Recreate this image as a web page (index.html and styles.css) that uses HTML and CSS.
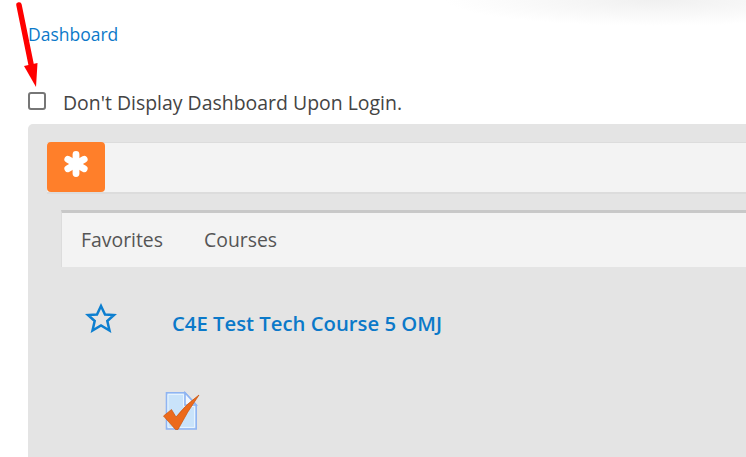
FILE: index.html
```html
<!DOCTYPE html>
<html lang="en">
<head>
  <meta charset="UTF-8">
  <title>Dashboard</title>
  <link rel="stylesheet" href="styles.css">
</head>
<body>

<div class="top-shadow"></div>

<!-- red arrow pasted over the screenshot -->
<svg class="arrow" width="40" height="90" viewBox="0 0 40 90">
  <path d="M19 5 L31 64" stroke="#f00" stroke-width="5.5" stroke-linecap="round" fill="none"/>
  <path d="M24 66 L37.5 63 L36 87 Z" fill="#f00"/>
</svg>

<header class="page-title">
  <a href="#">Dashboard</a>
</header>

<label class="hide-option">
  <input type="checkbox">
  <span>Don't Display Dashboard Upon Login.</span>
</label>

<section class="panel">
  <div class="panel-head">
    <div class="panel-logo">
      <svg width="26" height="26" viewBox="0 0 26 26">
        <g stroke="#fff" stroke-width="6.8" stroke-linecap="round">
          <path d="M13 3.5 V22.5"/>
          <path d="M4.8 8.2 L21.2 17.8"/>
          <path d="M4.8 17.8 L21.2 8.2"/>
        </g>
      </svg>
    </div>
  </div>

  <div class="tabs">
    <a href="#">Favorites</a>
    <a href="#">Courses</a>
  </div>

  <div class="course">
    <svg class="star" width="32" height="30" viewBox="0 0 32 30">
      <path d="M16 3 L20 11.5 L29 12 L22.3 18 L24.5 27.5 L16 22.5 L7.5 27.5 L9.7 18 L3 12 L12 11.5 Z" fill="none" stroke="#0d7fd0" stroke-width="2.5"/>
    </svg>
    <a class="course-name" href="#">C4E Test Tech Course 5 OMJ</a>
  </div>

  <div class="course-task">
    <svg width="37" height="40" viewBox="0 0 37 40">
      <path d="M3.5 1.8 H22 L33.2 14 V38 H3.5 Z" fill="#c9e3fa" stroke="#8fb4f2" stroke-width="1.6"/>
      <path d="M5 3.4 H20.5 V15.5 H31.6 V36.4 H5 Z" fill="none" stroke="#eaf5fe" stroke-width="1"/>
      <path d="M22 1.8 V14 H33.2 Z" fill="#f1f7fe" stroke="#8fb4f2" stroke-width="1.6"/>
      <path d="M0.5 25 L8.5 18.5 L13 26 Q23 13 36 4 Q24 21 15 38.5 L12.5 38.5 Z" fill="#ec6a1c" stroke="#c9550f" stroke-width=".7"/>
    </svg>
  </div>
</section>

</body>
</html>
```

FILE: styles.css
```css
html, body {
  height: 100%;
}

body {
  font-family: "Open Sans", sans-serif;
  background: #fff;
  color: #444;
  margin: 0;
  padding: 0 0 0 28px;
  box-sizing: border-box;
  display: flex;
  flex-direction: column;
  overflow: hidden;
  position: relative;
}

a {
  color: #0b79c9;
  text-decoration: none;
}

.top-shadow {
  position: absolute;
  top: 0;
  right: 0;
  width: 300px;
  height: 30px;
  background: radial-gradient(ellipse 210px 26px at 70% 0, #f0f0f0, #fff);
}

.arrow {
  position: absolute;
  left: 0;
  top: 0;
}

.page-title {
  padding-top: 22px;
  height: 82px;
  box-sizing: border-box;
  font-size: 17.5px;
  line-height: 24px;
}

.hide-option {
  display: flex;
  align-items: center;
  height: 42px;
  font-size: 19.45px;
  color: #444;
}

.hide-option input {
  width: 18px;
  height: 18px;
  margin: 0 17px 4px 0;
  appearance: none;
  background: #fff;
  border: 2px solid #767676;
  border-radius: 3px;
  box-sizing: border-box;
}

.hide-option span {
  margin-bottom: 2px;
}

.panel {
  flex: 1;
  background: #e4e4e4;
  border-top-left-radius: 5px;
  padding: 18px 0 0 19px;
}

.panel-head {
  height: 52px;
  background: #f3f3f3;
  border: 1px solid #dcdcdc;
  border-width: 1px 0 2px 0;
  box-sizing: border-box;
}

.panel-logo {
  width: 58px;
  height: 50px;
  margin-top: -1px;
  background: #ff7f2a;
  border-radius: 4px;
  display: flex;
  align-items: center;
  justify-content: center;
  padding-bottom: 7px;
  box-sizing: border-box;
}

.tabs {
  display: flex;
  gap: 41px;
  align-items: center;
  margin: 16px 0 0 14px;
  height: 57px;
  padding: 0 0 2px 19px;
  box-sizing: border-box;
  background: #f3f3f3;
  border-top: 3px solid #c8c8c8;
  border-left: 1px solid #dcdcdc;
  font-size: 19.4px;
}

.tabs a {
  color: #555;
}

.course {
  display: flex;
  align-items: center;
  height: 40px;
  margin-top: 36px;
  padding-left: 38px;
}

.star {
  flex: none;
  margin-bottom: 10px;
}

.course-name {
  margin-left: 55px;
  font-size: 20.3px;
  font-weight: 600;
}

.course-task {
  margin: 48px 0 0 116px;
}

.course-task svg {
  display: block;
}
```
